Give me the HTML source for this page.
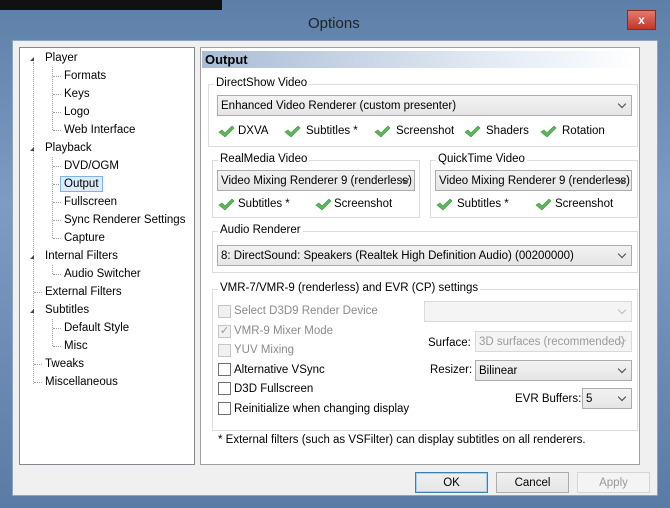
<!DOCTYPE html>
<html><head><style>
*{margin:0;padding:0;box-sizing:border-box}
body{width:670px;height:508px;overflow:hidden;font-family:"Liberation Sans",sans-serif;font-size:11.5px;color:#000;position:relative;background:linear-gradient(180deg,#5d7fa8,#7d9cc4 40%,#5a7ba5)}
.a{position:absolute;white-space:nowrap}
.client{position:absolute;left:12px;top:40px;width:646px;height:456px;background:#f0f0f0;border:1px solid #8ea4c0}
.tree{position:absolute;left:19px;top:47px;width:176px;height:418px;background:#fff;border:1px solid #828790}
.panel{position:absolute;left:200px;top:47px;width:440px;height:418px;background:#fff;border:1px solid #a0a0a0}
.hdr{position:absolute;left:202px;top:51px;width:436px;height:17px;background:linear-gradient(90deg,#a9bcd6,#dde6f1 60%,#fff);font-weight:bold;font-size:13px;padding:1px 0 0 3px}
.grp{position:absolute;border:1px solid #dcdcdc}
.lbl{position:absolute;background:#fff;padding:0 2px;top:-8px;left:5px}
.dd{position:absolute;height:21px;border:1px solid #acacac;background:linear-gradient(#f2f2f2,#e5e5e5);padding:4px 18px 0 3px;overflow:hidden;white-space:nowrap}
.dd:after{content:"";position:absolute;right:6px;top:5px;width:5px;height:5px;border-right:1.5px solid #444;border-bottom:1.5px solid #444;transform:rotate(45deg)}
.dis{color:#9a9a9a;background:#f4f4f4;border-color:#d9d9d9}
.dis:after{border-color:#bbb}
.cb{position:absolute;width:13px;height:13px;border:1px solid #707070;background:#fff}
.cb.d{border-color:#c5c5c5;background:#f0f0f0}
.btn{position:absolute;height:21px;border:1px solid #acacac;background:linear-gradient(#f0f0f0,#e5e5e5);text-align:center;padding-top:4px}
.t{position:absolute;white-space:nowrap;margin-top:1px}
.dot{position:absolute;border-left:1px dotted #a0a0a0}
.hd{position:absolute;border-top:1px dotted #a0a0a0;width:8px}
.tri{position:absolute;width:0;height:0;border-left:4px solid transparent;border-bottom:4px solid #444}
</style></head><body>
<div class="a" style="left:0;top:0;width:222px;height:10px;background:#111"></div>
<div class="a" style="left:308px;top:15px;font-size:15px;color:#222">Options</div>
<div class="a" style="left:627px;top:10px;width:29px;height:20px;background:linear-gradient(#e27c6a,#c2352a);border:1px solid #8a2a22;color:#fff;text-align:center;font-size:12px;font-weight:bold;padding-top:2px">x</div>
<div class="client"></div>
<div class="tree"></div>
<div class="dot" style="left:33px;top:62px;height:322px"></div>
<div class="dot" style="left:52px;top:67px;height:63px"></div>
<div class="dot" style="left:52px;top:157px;height:81px"></div>
<div class="dot" style="left:52px;top:265px;height:9px"></div>
<div class="dot" style="left:52px;top:319px;height:27px"></div>
<div class="tri" style="left:30px;top:57px"></div>
<div class="tri" style="left:30px;top:147px"></div>
<div class="tri" style="left:30px;top:255px"></div>
<div class="tri" style="left:30px;top:309px"></div>
<div class="t" style="left:45px;top:51px">Player</div>
<div class="hd" style="left:53px;top:76px"></div><div class="t" style="left:64px;top:69px">Formats</div>
<div class="hd" style="left:53px;top:94px"></div><div class="t" style="left:64px;top:87px">Keys</div>
<div class="hd" style="left:53px;top:112px"></div><div class="t" style="left:64px;top:105px">Logo</div>
<div class="hd" style="left:53px;top:130px"></div><div class="t" style="left:64px;top:123px">Web Interface</div>
<div class="t" style="left:45px;top:141px">Playback</div>
<div class="hd" style="left:53px;top:166px"></div><div class="t" style="left:64px;top:159px">DVD/OGM</div>
<div class="hd" style="left:53px;top:184px"></div><div class="t" style="left:60px;top:175px;border:1px solid #7eb4ea;background:#dcecfc;padding:1px 3px">Output</div>
<div class="hd" style="left:53px;top:202px"></div><div class="t" style="left:64px;top:195px">Fullscreen</div>
<div class="hd" style="left:53px;top:220px"></div><div class="t" style="left:64px;top:213px">Sync Renderer Settings</div>
<div class="hd" style="left:53px;top:238px"></div><div class="t" style="left:64px;top:231px">Capture</div>
<div class="t" style="left:45px;top:249px">Internal Filters</div>
<div class="hd" style="left:53px;top:274px"></div><div class="t" style="left:64px;top:267px">Audio Switcher</div>
<div class="t" style="left:45px;top:285px">External Filters</div>
<div class="t" style="left:45px;top:303px">Subtitles</div>
<div class="hd" style="left:53px;top:328px"></div><div class="t" style="left:64px;top:321px">Default Style</div>
<div class="hd" style="left:53px;top:346px"></div><div class="t" style="left:64px;top:339px">Misc</div>
<div class="t" style="left:45px;top:357px">Tweaks</div>
<div class="t" style="left:45px;top:375px">Miscellaneous</div>
<div class="hd" style="left:34px;top:364px"></div><div class="hd" style="left:34px;top:382px"></div><div class="hd" style="left:34px;top:292px"></div>

<div class="panel"></div>
<div class="hdr">Output</div>

<div class="grp" style="left:208px;top:84px;width:430px;height:63px"><span class="lbl">DirectShow Video</span></div>
<div class="dd" style="left:217px;top:95px;width:415px">Enhanced Video Renderer (custom presenter)</div>

<div class="grp" style="left:212px;top:160px;width:208px;height:58px"><span class="lbl">RealMedia Video</span></div>
<div class="dd" style="left:217px;top:170px;width:198px">Video Mixing Renderer 9 (renderless)</div>
<div class="grp" style="left:430px;top:160px;width:208px;height:58px"><span class="lbl">QuickTime Video</span></div>
<div class="dd" style="left:435px;top:170px;width:197px">Video Mixing Renderer 9 (renderless)</div>

<div class="grp" style="left:212px;top:231px;width:426px;height:42px"><span class="lbl">Audio Renderer</span></div>
<div class="dd" style="left:217px;top:245px;width:415px">8: DirectSound: Speakers (Realtek High Definition Audio) (00200000)</div>

<svg class="a" style="left:0;top:0" width="670" height="508">
<defs><path id="c" d="M0 7 L3 5 L6 8 L13 1 L15 3 L6 12 Z" fill="#5cb85c" stroke="#3f8f3f" stroke-width=".6"/></defs>
<use href="#c" x="219" y="125"/><use href="#c" x="285" y="125"/><use href="#c" x="375" y="125"/><use href="#c" x="465" y="125"/><use href="#c" x="541" y="125"/>
<use href="#c" x="219" y="198"/><use href="#c" x="316" y="198"/><use href="#c" x="437" y="198"/><use href="#c" x="536" y="198"/>
</svg>
<div class="t" style="left:238px;top:124px">DXVA</div>
<div class="t" style="left:306px;top:124px">Subtitles *</div>
<div class="t" style="left:396px;top:124px">Screenshot</div>
<div class="t" style="left:486px;top:124px">Shaders</div>
<div class="t" style="left:562px;top:124px">Rotation</div>
<div class="t" style="left:238px;top:197px">Subtitles *</div>
<div class="t" style="left:334px;top:197px">Screenshot</div>
<div class="t" style="left:457px;top:197px">Subtitles *</div>
<div class="t" style="left:555px;top:197px">Screenshot</div>

<div class="grp" style="left:212px;top:289px;width:426px;height:142px"><span class="lbl">VMR-7/VMR-9 (renderless) and EVR (CP) settings</span></div>
<div class="cb d" style="left:218px;top:305px"></div><div class="t" style="left:234px;top:304px;color:#8a8a8a">Select D3D9 Render Device</div>
<div class="cb d" style="left:218px;top:325px;color:#999;font-size:11px;line-height:11px;text-align:center">✓</div><div class="t" style="left:234px;top:324px;color:#8a8a8a">VMR-9 Mixer Mode</div>
<div class="cb d" style="left:218px;top:344px"></div><div class="t" style="left:234px;top:343px;color:#8a8a8a">YUV Mixing</div>
<div class="cb" style="left:218px;top:363px"></div><div class="t" style="left:234px;top:363px">Alternative VSync</div>
<div class="cb" style="left:218px;top:382px"></div><div class="t" style="left:234px;top:382px">D3D Fullscreen</div>
<div class="cb" style="left:218px;top:402px"></div><div class="t" style="left:234px;top:402px">Reinitialize when changing display</div>
<div class="dd dis" style="left:424px;top:301px;width:208px;height:21px"></div>
<div class="t" style="left:428px;top:336px">Surface:</div>
<div class="dd dis" style="left:475px;top:331px;width:157px">3D surfaces (recommended)</div>
<div class="t" style="left:430px;top:363px">Resizer:</div>
<div class="dd" style="left:475px;top:360px;width:157px">Bilinear</div>
<div class="t" style="left:515px;top:392px">EVR Buffers:</div>
<div class="dd" style="left:582px;top:388px;width:50px">5</div>
<div class="t" style="left:218px;top:433px">* External filters (such as VSFilter) can display subtitles on all renderers.</div>

<div class="btn" style="left:415px;top:472px;width:73px;border-color:#3c7fb1;box-shadow:inset 0 0 0 1px #a6d0f0">OK</div>
<div class="btn" style="left:496px;top:472px;width:73px">Cancel</div>
<div class="btn" style="left:577px;top:472px;width:73px;color:#999;border-color:#d5d5d5;background:#f4f4f4">Apply</div>
</body></html>
